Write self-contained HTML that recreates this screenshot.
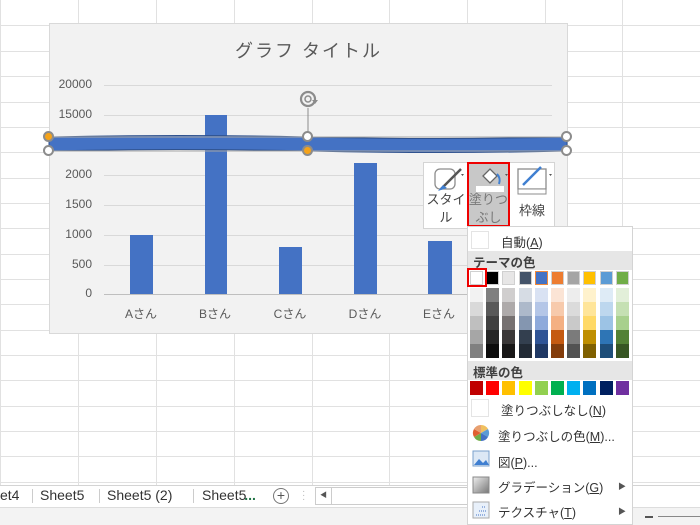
<!DOCTYPE html>
<html><head><meta charset="utf-8"><style>
*{margin:0;padding:0;box-sizing:border-box}
body{width:700px;height:525px;overflow:hidden;background:#fff;position:relative;font-family:"Liberation Sans","Noto Sans CJK JP",sans-serif;color:#404040}
.a{position:absolute}
.vl{position:absolute;top:0;width:1px;height:486px;background:#e1e1e1}
.hl{position:absolute;left:0;width:700px;height:1px;background:#e1e1e1}
.yl{position:absolute;right:0;font-size:12px;color:#595959;text-align:right;width:50px}
.g{position:absolute;left:104px;width:448px;height:1px;background:#d9d9d9}
.bar{position:absolute;background:#4472c4;bottom:39px}
.xl{position:absolute;top:305px;font-size:12px;color:#595959;width:50px;text-align:center}
.h{position:absolute;width:11px;height:11px;border-radius:50%;border:2px solid #8c8c8c;background:#fff}
.h.o{background:#f5a31a}
.sw{position:absolute;width:13px;height:14px;z-index:6}
.mi{position:absolute;left:0;width:166px;font-size:12.5px;color:#333;white-space:nowrap}
</style></head><body>
<div class="hl" style="top:25px"></div><div class="hl" style="top:51px"></div><div class="hl" style="top:76px"></div><div class="hl" style="top:102px"></div><div class="hl" style="top:127px"></div><div class="hl" style="top:152px"></div><div class="hl" style="top:178px"></div><div class="hl" style="top:203px"></div><div class="hl" style="top:228px"></div><div class="hl" style="top:254px"></div><div class="hl" style="top:279px"></div><div class="hl" style="top:304px"></div><div class="hl" style="top:330px"></div><div class="hl" style="top:355px"></div><div class="hl" style="top:380px"></div><div class="hl" style="top:406px"></div><div class="hl" style="top:431px"></div><div class="hl" style="top:456px"></div><div class="hl" style="top:482px"></div>
<div class="vl" style="left:0px"></div><div class="vl" style="left:78px"></div><div class="vl" style="left:156px"></div><div class="vl" style="left:234px"></div><div class="vl" style="left:312px"></div><div class="vl" style="left:389px"></div><div class="vl" style="left:467px"></div><div class="vl" style="left:545px"></div><div class="vl" style="left:622px"></div>

<div class="a" style="left:0;top:485px;width:700px;height:22px;background:#fff;border-top:1px solid #d4d4d4"></div>
<div class="a" style="left:0;top:487px;font-size:14px;color:#333">et4</div>
<div class="a" style="left:32px;top:489px;width:1px;height:14px;background:#ccc"></div>
<div class="a" style="left:40px;top:487px;font-size:14px;color:#333">Sheet5</div>
<div class="a" style="left:99px;top:489px;width:1px;height:14px;background:#ccc"></div>
<div class="a" style="left:107px;top:487px;font-size:14px;color:#333">Sheet5 (2)</div>
<div class="a" style="left:193px;top:489px;width:1px;height:14px;background:#ccc"></div>
<div class="a" style="left:202px;top:487px;font-size:14px;color:#333">Sheet5 <span style="color:#217346;font-weight:bold;margin-left:-6px">...</span></div>
<div class="a" style="left:273px;top:488px;width:16px;height:16px;border:1px solid #777;border-radius:50%;font-size:14px;line-height:13px;text-align:center;color:#555">+</div>
<div class="a" style="left:302px;top:490px;font-size:10px;color:#bbb;line-height:4px">·<br>·<br>·</div>
<div class="a" style="left:315px;top:487px;width:17px;height:18px;border:1px solid #ccc;font-size:7px;color:#555;text-align:center;line-height:16px">◀</div>
<div class="a" style="left:332px;top:487px;width:140px;height:18px;border:1px solid #ccc;border-left:none"></div>
<div class="a" style="left:0;top:507px;width:700px;height:18px;background:#f3f3f3;border-top:1px solid #ddd"></div>
<div class="a" style="left:645px;top:516px;width:8px;height:2px;background:#555"></div>
<div class="a" style="left:658px;top:516px;width:42px;height:1px;background:#888"></div>

<div class="a" style="left:49px;top:23px;width:519px;height:311px;background:#f2f2f2;border:1px solid #d9d9d9"></div>
<div class="a" style="left:49px;top:37px;width:519px;text-align:center;font-size:18px;color:#595959;letter-spacing:2px">グラフ タイトル</div>
<div class="g" style="top:85px"></div><div class="g" style="top:115px"></div><div class="g" style="top:175px"></div><div class="g" style="top:205px"></div><div class="g" style="top:235px"></div><div class="g" style="top:265px"></div><div class="g" style="top:294px;background:#bfbfbf"></div>
<div class="a" style="left:42px;top:0;width:50px;height:340px">
<div class="yl" style="top:77px">20000</div><div class="yl" style="top:107px">15000</div><div class="yl" style="top:167px">2000</div><div class="yl" style="top:197px">1500</div><div class="yl" style="top:227px">1000</div><div class="yl" style="top:257px">500</div><div class="yl" style="top:286px">0</div></div>
<div class="bar" style="left:130px;width:23px;top:235px;height:59px"></div>
<div class="bar" style="left:205px;width:22px;top:115px;height:179px"></div>
<div class="bar" style="left:279px;width:23px;top:247px;height:47px"></div>
<div class="bar" style="left:354px;width:23px;top:163px;height:131px"></div>
<div class="bar" style="left:428px;width:24px;top:241px;height:53px"></div>
<div class="xl" style="left:116px">Aさん</div><div class="xl" style="left:190px">Bさん</div><div class="xl" style="left:265px">Cさん</div><div class="xl" style="left:340px">Dさん</div><div class="xl" style="left:414px">Eさん</div>

<svg class="a" style="left:0;top:0" width="700" height="200">
<path d="M49 137 Q180 134 308 137 T567 137 L567 151 Q440 154 308 151 T49 151 Z" fill="#4472c4" stroke="#2f528f" stroke-width="1"/>
<line x1="49" y1="137" x2="567" y2="137" stroke="#a6a6a6" stroke-width="1"/>
<line x1="49" y1="151" x2="567" y2="151" stroke="#a6a6a6" stroke-width="1"/>
<line x1="308" y1="108" x2="308" y2="137" stroke="#8c8c8c"/>
<circle cx="308" cy="99" r="7" fill="none" stroke="#8c8c8c" stroke-width="2.2"/>
<circle cx="308" cy="99" r="3" fill="none" stroke="#8c8c8c" stroke-width="1.5"/>
<path d="M312 100 l6 0 l-3 4z" fill="#8c8c8c"/>
</svg>
<div class="h o" style="left:43px;top:131px"></div><div class="h" style="left:302px;top:131px"></div><div class="h" style="left:561px;top:131px"></div>
<div class="h" style="left:43px;top:145px"></div><div class="h o" style="left:302px;top:145px"></div><div class="h" style="left:561px;top:145px"></div>

<div class="a" style="left:423px;top:162px;width:132px;height:67px;background:#fff;border:1px solid #d4d4d4"></div>
<div class="a" style="left:467px;top:162px;width:43px;height:65px;background:#c8c8c8;border:2px solid #e00"></div>
<svg class="a" style="left:423px;top:162px" width="132" height="40">
<rect x="12" y="7" width="20" height="20" rx="5" fill="#fff" stroke="#8c8c8c" stroke-width="1.3"/>
<path d="M18 27 l6 -6 l14 -14" stroke="#555" stroke-width="2.5"/><path d="M15 29 l5 -6 l4 3z" fill="#3f7fd1"/>
<path d="M38 12 l3 0 l-1.5 2z" fill="#555"/>
<rect x="53" y="24" width="28" height="6" fill="#fff"/>
<path d="M60 14 l7 -7 l7 7 l-7 7z" fill="#fff" stroke="#666" stroke-width="1.3"/><path d="M74 12 q4 4 2 10" stroke="#3f7fd1" stroke-width="2" fill="none"/>
<path d="M82 12 l3 0 l-1.5 2z" fill="#555"/>
<rect x="95" y="7" width="28" height="20" fill="#fff" stroke="#8c8c8c" stroke-width="1.3"/><rect x="95" y="27" width="28" height="5" fill="#fff" stroke="#8c8c8c"/>
<path d="M100 23 l18 -18" stroke="#3f7fd1" stroke-width="2.5"/>
<path d="M126 12 l3 0 l-1.5 2z" fill="#555"/>
</svg>
<div class="a" style="left:424px;top:191px;width:44px;font-size:13px;line-height:18px;text-align:center;color:#444;white-space:nowrap">スタイ<br>ル</div>
<div class="a" style="left:467px;top:191px;width:43px;font-size:13px;line-height:18px;text-align:center;color:#777;white-space:nowrap">塗りつ<br>ぶし</div>
<div class="a" style="left:512px;top:200px;width:40px;font-size:13px;text-align:center;color:#444">枠線</div>

<div class="a" style="left:467px;top:226px;width:166px;height:299px;background:#fff;border:1px solid #d4d4d4;z-index:5">
<div class="a" style="left:3px;top:4px;width:18px;height:18px;border:1px solid #e4e4e4"></div>
<div class="mi" style="left:33px;top:5px">自動(<u>A</u>)</div>
<div class="a" style="left:0;top:24px;width:164px;height:19px;background:#e6e6e6;font-weight:bold;font-size:12.5px;padding:1px 0 0 5px">テーマの色</div>
<div class="a" style="left:0;top:134px;width:164px;height:19px;background:#e6e6e6;font-weight:bold;font-size:12.5px;padding:1px 0 0 5px">標準の色</div>
<div class="a" style="left:3px;top:172px;width:18px;height:18px;border:1px solid #e4e4e4"></div>
<div class="mi" style="left:33px;top:173px">塗りつぶしなし(<u>N</u>)</div>
<div class="mi" style="left:30px;top:199px">塗りつぶしの色(<u>M</u>)...</div>
<div class="mi" style="left:30px;top:225px">図(<u>P</u>)...</div>
<div class="mi" style="left:30px;top:250px">グラデーション(<u>G</u>)</div>
<div class="mi" style="left:30px;top:275px">テクスチャ(<u>T</u>)</div>
<div class="a" style="left:150px;top:254px;font-size:8px;color:#555">▶</div>
<div class="a" style="left:150px;top:279px;font-size:8px;color:#555">▶</div>
<svg class="a" style="left:3px;top:196px" width="22" height="100">
<g transform="translate(10,10)"><path d="M0 0 L0 -8 A8 8 0 0 1 7 -4Z" fill="#f0c060"/><path d="M0 0 L7 -4 A8 8 0 0 1 7 4Z" fill="#5b9bd5"/><path d="M0 0 L7 4 A8 8 0 0 1 0 8Z" fill="#4472c4"/><path d="M0 0 L0 8 A8 8 0 0 1 -7 4Z" fill="#70ad47"/><path d="M0 0 L-7 4 A8 8 0 0 1 -7 -4Z" fill="#e06030"/><path d="M0 0 L-7 -4 A8 8 0 0 1 0 -8Z" fill="#e8a070"/></g>
<rect x="2" y="28" width="16" height="15" fill="#dce8f5" stroke="#7aa0cc"/><path d="M3 42 l5 -6 l4 4 l3 -3 l3 5z" fill="#3f7fd1"/>
<defs><linearGradient id="gg" x1="0" y1="0" x2="1" y2="1"><stop offset="0" stop-color="#eee"/><stop offset="1" stop-color="#777"/></linearGradient></defs>
<rect x="2" y="54" width="16" height="16" fill="url(#gg)" stroke="#888"/>
<rect x="2" y="79" width="16" height="16" fill="#e8f0fa" stroke="#aaa"/><path d="M5 92 h10 M8 88 h7 M11 84 h4" stroke="#4472c4" stroke-dasharray="1 1"/>
</svg>
</div>

<div id="sw"></div>
<script>
var th=["#ffffff","#000000","#e7e6e6","#44546a","#4472c4","#ed7d31","#a5a5a5","#ffc000","#5b9bd5","#70ad47"];
var sh=[["#f2f2f2","#d9d9d9","#bfbfbf","#a6a6a6","#808080"],["#808080","#595959","#404040","#262626","#0d0d0d"],["#d0cece","#aeaaaa","#767171","#3b3838","#181717"],["#d6dce4","#adb9ca","#8496b0","#333f4f","#222a35"],["#d9e2f3","#b4c6e7","#8eaadb","#2f5496","#1f3864"],["#fbe4d5","#f7caac","#f4b083","#c55a11","#833c0b"],["#ededed","#dbdbdb","#c9c9c9","#7b7b7b","#525252"],["#fff2cc","#ffe599","#ffd966","#bf8f00","#7f6000"],["#deebf6","#bdd7ee","#9cc3e5","#2e75b5","#1e4e79"],["#e2efd9","#c5e0b3","#a8d08d","#538135","#375623"]];
var st=["#c00000","#ff0000","#ffc000","#ffff00","#92d050","#00b050","#00b0f0","#0070c0","#002060","#7030a0"];
var h="";
for(var i=0;i<10;i++){var x=470+i*16.2;
h+='<div class="sw" style="left:'+x+'px;top:271px;background:'+th[i]+';border:1px solid '+(i==4?'#f08a3c':'#d0d0d0')+'"></div>';
for(var j=0;j<5;j++)h+='<div class="sw" style="left:'+x+'px;top:'+(288+j*14)+'px;background:'+sh[i][j]+'"></div>';
h+='<div class="sw" style="left:'+x+'px;top:381px;background:'+st[i]+'"></div>';}
h+='<div class="a" style="left:467px;top:268px;width:20px;height:19px;border:2px solid #e00;z-index:7"></div>';
document.getElementById("sw").innerHTML=h;
</script>
</body></html>
